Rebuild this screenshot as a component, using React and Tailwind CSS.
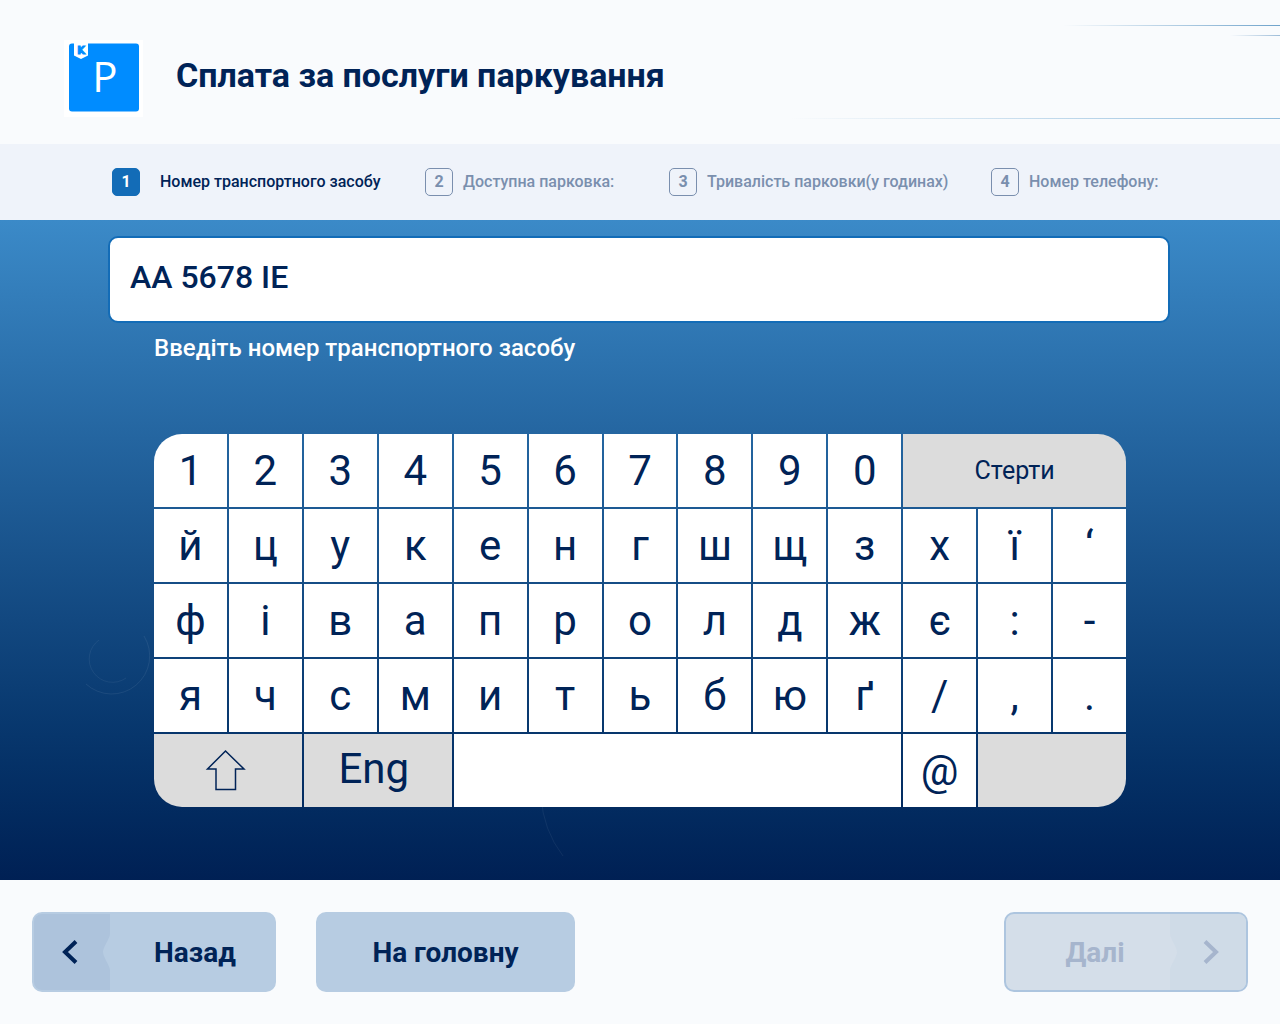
// src/App.jsx
import { useState } from "react";

const steps = [
  { id: 1, label: "Номер транспортного засобу" },
  { id: 2, label: "Доступна парковка:" },
  { id: 3, label: "Тривалість парковки(у годинах)" },
  { id: 4, label: "Номер телефону:" },
];

const digits = "1234567890".split("");
const letters = "йцукенгшщзхї‘фівапролджє:-ячсмитьбюґ/,.".split("");

const keyBase = "flex items-center justify-center text-[42px] leading-none";

function Logo() {
  return (
    <svg viewBox="0 0 79 77" className="w-[79px] h-[77px] shrink-0" role="img" aria-label="Паркування">
      <rect width="79" height="77" fill="#fff" />
      <rect x="5" y="3.500" width="70" height="68" rx="3" fill="#008cff" />
      <path d="M10 3h14v12.500l-7 3.500-7-3.500z" fill="#fff" />
      <text x="17" y="14" textAnchor="middle" fontSize="10" fontWeight="700" fill="#008cff" stroke="#008cff" strokeWidth="1" fontFamily="'DejaVu Sans', sans-serif">K</text>
      <text x="41" y="52" textAnchor="middle" fontSize="42" fill="#fff" fontFamily="'Open Sans', sans-serif">P</text>
    </svg>
  );
}

function Header() {
  return (
    <header className="relative h-36 flex items-center gap-[33px] px-16 pt-3">
      <div className="absolute right-0 top-[25px] w-[217px] h-px bg-linear-to-l from-[#6fa3cb] to-transparent" />
      <div className="absolute right-0 top-[35px] w-[50px] h-px bg-linear-to-l from-[#9dbcd8] to-transparent" />
      <div className="absolute right-0 top-[118px] w-[490px] h-px bg-linear-to-l from-[#92bddd] to-transparent" />
      <Logo />
      <h1 className="text-[34px] leading-10 font-bold pb-1.5">Сплата за послуги паркування</h1>
    </header>
  );
}

function Steps({ current }) {
  return (
    <ol className="grid grid-cols-[313fr_244fr_322fr_177fr] items-center h-[76px] px-28 bg-[#eff3fa]">
      {steps.map((step) => {
        const active = step.id === current;
        return (
          <li
            key={step.id}
            className={`flex items-center whitespace-nowrap text-base ${active ? "gap-5" : "gap-[10px] text-[#7a8fae]"}`}
          >
            <span
              className={`w-7 h-7 flex items-center justify-center rounded-[5px] border font-bold ${
                active ? "border-[#136cb7] bg-[#136cb7] text-white" : "border-[#7a8fae]"
              }`}
            >
              {step.id}
            </span>
            <span className="font-medium">{step.label}</span>
          </li>
        );
      })}
    </ol>
  );
}

function Keyboard({ onKey, onErase }) {
  return (
    <div className="grid grid-cols-13 auto-rows-[73px] gap-0.5 rounded-[28px] overflow-hidden">
      {digits.map((k) => (
        <button key={k} type="button" onClick={() => onKey(k)} className={`${keyBase} bg-white`}>{k}</button>
      ))}
      <button
        type="button"
        onClick={onErase}
        className="col-span-3 flex items-center justify-center text-[25px] bg-[#dcdcdc]"
      >
        Стерти
      </button>
      {letters.map((k) => (
        <button key={k} type="button" onClick={() => onKey(k)} className={`${keyBase} bg-white`}>{k}</button>
      ))}
      <button type="button" aria-label="Shift" className={`${keyBase} col-span-2 bg-[#dcdcdc]`}>
        <svg viewBox="0 0 40 42" className="w-10 h-[42px] overflow-visible" fill="none" stroke="#002357" strokeWidth="1.500">
          <path d="M17.500 1 36 19H27.500v20.500H8V19H-0.500z" />
        </svg>
      </button>
      <button type="button" className={`${keyBase} col-span-2 pr-2 pb-1 bg-[#dcdcdc]`}>Eng</button>
      <button type="button" aria-label="Пробіл" onClick={() => onKey(" ")} className={`${keyBase} col-span-6 bg-white`} />
      <button type="button" onClick={() => onKey("@")} className={`${keyBase} bg-white`}>@</button>
      <div className="col-span-2 bg-[#dcdcdc]" />
    </div>
  );
}

function Footer() {
  return (
    <footer className="flex items-center gap-10 h-36 px-8">
      <button
        type="button"
        className="flex items-center w-[244px] h-20 rounded-[10px] border-2 border-[#b7cce2] bg-[#b7cce2] overflow-hidden"
      >
        <svg viewBox="0 0 76 76" className="w-[76px] h-[76px] shrink-0" fill="none">
          <path d="M0 0h76v20c0 4-7 13-7 18s7 14 7 18v20H0z" fill="#adc3dc" />
          <path d="M42 27.500 31 38 42 48.500" stroke="#002357" strokeWidth="4" />
        </svg>
        <span className="flex-1 pl-1.5 pt-0.5 text-center text-[28px] font-bold">Назад</span>
      </button>
      <button type="button" className="w-[259px] h-20 pt-0.5 rounded-[10px] bg-[#b7cce2] text-[28px] font-bold">
        На головну
      </button>
      <button
        type="button"
        disabled
        className="ml-auto flex items-center w-[244px] h-20 rounded-[10px] border-2 border-[#adc5df] bg-[#d4dee9] text-[#a6b5cd] overflow-hidden"
      >
        <span className="flex-1 pl-3.5 pt-0.5 text-center text-[28px] font-bold">Далі</span>
        <svg viewBox="0 0 76 76" className="w-[76px] h-[76px] shrink-0" fill="none">
          <path d="M76 0H0v20c0 4 7 13 7 18s-7 14-7 18v20h76z" fill="#cfdbe7" />
          <path d="M35 27.500 46 38 35 48.500" stroke="#a6b5cd" strokeWidth="4" />
        </svg>
      </button>
    </footer>
  );
}

export default function App() {
  const [plate, setPlate] = useState("AA 5678 IE");

  return (
    <div className="min-h-screen flex flex-col bg-[#f9fbfd] text-[#002357] font-['Roboto',sans-serif]">
      <Header />
      <Steps current={1} />
      <main className="relative flex-1 flex flex-col pt-4 bg-linear-to-b from-[#3b8ac8] to-[#002054]">
        {/* faint decorative rings */}
        <svg className="absolute left-0 top-0 w-[700px] h-[660px]" fill="none" stroke="#fff">
          <path d="M86 464a38 38 0 0 0 58-48" strokeOpacity="0.07" />
          <path d="M99 420a23 23 0 1 0 27 38" strokeOpacity="0.06" />
          <path d="M541 576q2 34 22 60" strokeOpacity="0.06" />
        </svg>
        <div className="relative pl-[108px] pr-[110px]">
          <input
            id="plate"
            value={plate}
            onChange={(e) => setPlate(e.target.value)}
            className="w-full h-[87px] px-5 pb-1.5 rounded-[10px] border-2 border-[#136cb7] bg-white text-[32px] font-medium outline-none"
          />
        </div>
        <div className="relative px-[154px]">
          <label htmlFor="plate" className="block pt-[7px] h-[111px] text-2xl leading-9 font-medium text-white">
            Введіть номер транспортного засобу
          </label>
          <Keyboard onKey={(k) => setPlate(plate + k)} onErase={() => setPlate(plate.slice(0, -1))} />
        </div>
      </main>
      <Footer />
    </div>
  );
}
